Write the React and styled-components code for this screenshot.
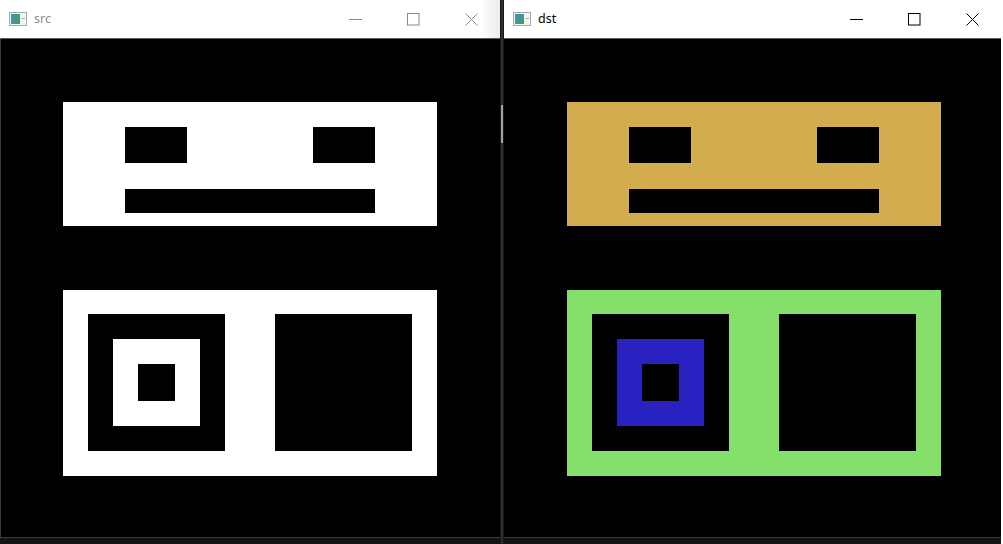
import React from "react";
import styled, { createGlobalStyle } from "styled-components";

const GlobalStyle = createGlobalStyle`
  html, body {
    margin: 0;
    padding: 0;
    background: #ffffff;
    overflow: hidden;
  }
`;

const PALETTE = {
  src: { top: "#ffffff", bottom: "#ffffff", inner: "#ffffff" },
  dst: { top: "#d4ac50", bottom: "#84e06a", inner: "#2a22c0" },
};

const Desktop = styled.div`
  display: flex;
  width: 1003px;
  height: 544px;
  background: #ffffff;
`;

const Window = styled.div`
  display: flex;
  flex-direction: column;
  width: ${(p) => p.width}px;
  height: 544px;
  flex-shrink: 0;
  background: #000;
`;

const TitleBar = styled.div`
  display: flex;
  align-items: center;
  height: 38px;
  background: ${(p) =>
    p.shaded
      ? "linear-gradient(90deg, #ffffff 0%, #ffffff 96%, #ececec 100%)"
      : "#ffffff"};
  border-bottom: 1px solid #5c5c5c;
  font-family: "Segoe UI", "Noto Sans", "Liberation Sans", sans-serif;
`;

const AppIcon = styled.svg`
  margin-left: 9px;
  margin-right: 7px;
  flex-shrink: 0;
`;

const Title = styled.span`
  flex: 1;
  font-size: 12.5px;
  color: ${(p) => (p.active ? "#000000" : "#8a8a8a")};
  margin-top: -1px;
`;

const Control = styled.div`
  width: 58px;
  height: 38px;
  display: flex;
  align-items: center;
  justify-content: center;
`;

const Canvas = styled.div`
  flex: 1;
  display: flex;
  flex-direction: column;
  gap: 64px;
  padding: 63px 0 0 ${(p) => p.left}px;
  background: #000;
  border-left: ${(p) => (p.frame ? "1px solid #3a3a3a" : "none")};
`;

const Footer = styled.div`
  height: 6px;
  background: #141414;
  border-top: 1px solid #3a3a3a;
`;

const Splitter = styled.div`
  width: 4px;
  flex-shrink: 0;
  background: #1a1a1a;
  display: flex;
  justify-content: center;
  padding-top: 0;
`;

const SplitLine = styled.div`
  width: 2px;
  height: 100%;
  background: linear-gradient(
    180deg,
    #2e2e2e 0px,
    #2e2e2e 105px,
    #a0a0a0 105px,
    #a0a0a0 143px,
    #2e2e2e 143px
  );
`;

const Panel = styled.div`
  width: 374px;
  height: ${(p) => p.h}px;
  background: ${(p) => p.color};
  box-sizing: border-box;
`;

const Face = styled(Panel)`
  padding: 25px 62px 0;
  display: flex;
  flex-direction: column;
  gap: 26px;
`;

const Eyes = styled.div`
  display: flex;
  justify-content: space-between;
`;

const Eye = styled.div`
  width: 62px;
  height: 36px;
  background: #000;
`;

const Mouth = styled.div`
  width: 250px;
  height: 24px;
  background: #000;
`;

const Boxes = styled(Panel)`
  padding: 24px 25px;
  display: flex;
  gap: 50px;
`;

const Frame = styled.div`
  width: 137px;
  height: 137px;
  background: #000;
  box-sizing: border-box;
  padding: 25px;
`;

const Ring = styled.div`
  width: 87px;
  height: 87px;
  background: ${(p) => p.color};
  box-sizing: border-box;
  padding: 25px;
`;

const Hole = styled.div`
  width: 37px;
  height: 37px;
  background: #000;
`;

const WindowIcon = () => (
  <AppIcon width="18" height="14" viewBox="0 0 18 14">
    <defs>
      <linearGradient id="ico" x1="0" y1="0" x2="1" y2="1">
        <stop offset="0" stopColor="#4a8fc4" />
        <stop offset="1" stopColor="#3aa05a" />
      </linearGradient>
    </defs>
    <rect x="0.5" y="0.5" width="17" height="13" fill="#f4f4f4" stroke="#a8a8a8" />
    <rect x="2" y="2" width="9" height="10" fill="url(#ico)" />
    <rect x="12" y="6" width="4" height="1" fill="#b0b0b0" />
  </AppIcon>
);

const Controls = ({ active }) => {
  const c = active ? "#000" : "#8a8a8a";
  return (
    <>
      <Control>
        <svg width="13" height="13" viewBox="0 0 13 13">
          <line x1="0" y1="6.5" x2="13" y2="6.5" stroke={c} strokeWidth="1" />
        </svg>
      </Control>
      <Control>
        <svg width="13" height="13" viewBox="0 0 13 13">
          <rect x="0.5" y="0.5" width="11.5" height="11.5" fill="none" stroke={c} strokeWidth="1" />
        </svg>
      </Control>
      <Control>
        <svg width="13" height="13" viewBox="0 0 13 13">
          <path d="M0.5 0.5 L12.5 12.5 M12.5 0.5 L0.5 12.5" stroke={c} strokeWidth="1" />
        </svg>
      </Control>
    </>
  );
};

const ImageWindow = ({ name, width, active, shaded, frame }) => {
  const colors = PALETTE[name];
  return (
    <Window width={width}>
      <TitleBar shaded={shaded}>
        <WindowIcon />
        <Title active={active}>{name}</Title>
        <Controls active={active} />
      </TitleBar>
      <Canvas left={frame ? 62 : 63} frame={frame}>
        <Face h={124} color={colors.top}>
          <Eyes>
            <Eye />
            <Eye />
          </Eyes>
          <Mouth />
        </Face>
        <Boxes h={186} color={colors.bottom}>
          <Frame>
            <Ring color={colors.inner}>
              <Hole />
            </Ring>
          </Frame>
          <Frame />
        </Boxes>
      </Canvas>
      <Footer />
    </Window>
  );
};

export default function App() {
  return (
    <>
      <GlobalStyle />
      <Desktop>
        <ImageWindow name="src" width={500} shaded frame />
        <Splitter>
          <SplitLine />
        </Splitter>
        <ImageWindow name="dst" width={497} active />
      </Desktop>
    </>
  );
}
